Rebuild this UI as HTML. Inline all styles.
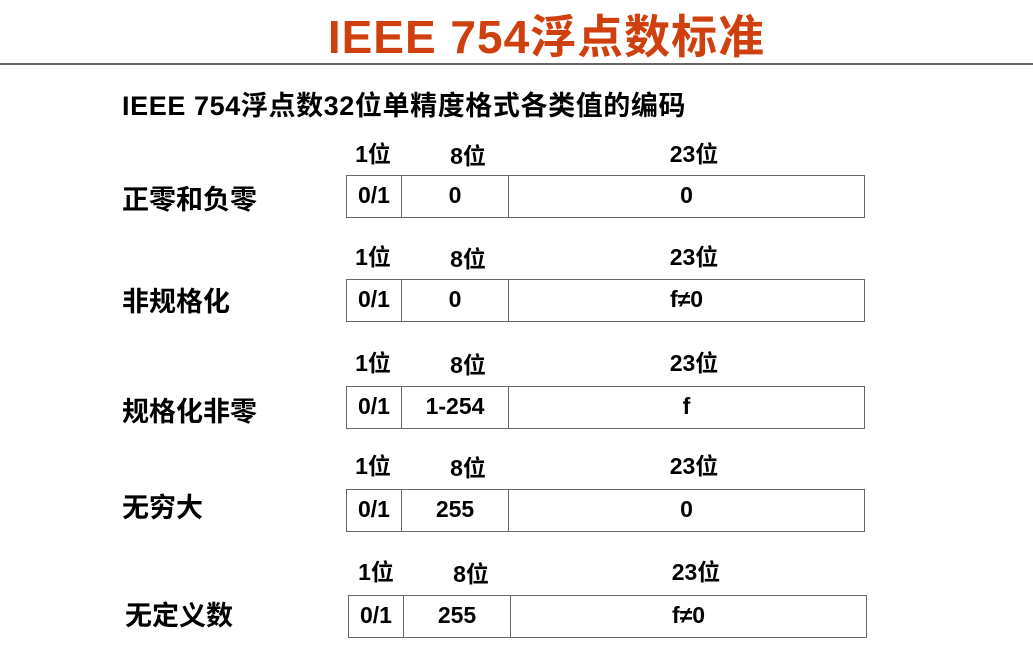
<!DOCTYPE html><html><head><meta charset="utf-8"><style>
body{margin:0;width:1033px;height:668px;background:#fff;position:relative;overflow:hidden;font-family:"Liberation Sans","Noto Sans CJK SC",sans-serif;font-weight:bold;color:#000}
.a{position:absolute;white-space:nowrap;line-height:1}
.t{left:0;width:1093px;text-align:center;top:14px;font-size:46px;color:#d0400e;letter-spacing:1px}
.hr{position:absolute;left:0;top:63px;width:1033px;height:2px;background:#666}
.s{left:122px;top:93px;font-size:27px;letter-spacing:0.6px}
.h{font-size:23px;transform:translateX(-50%)}
.l{left:122px;font-size:27px}
.tb{position:absolute;height:43px;width:519px;border:1px solid #666;box-sizing:border-box;display:flex}
.tb div{border-right:1px solid #666;box-sizing:border-box;display:flex;justify-content:center;align-items:center;font-size:23px;padding-bottom:3px}
.tb div:last-child{border:none;flex:1}
</style></head><body>
<div class="a t">IEEE 754浮点数标准</div>
<div class="hr"></div>
<div class="a s">IEEE 754浮点数32位单精度格式各类值的编码</div>

<div class="a h" style="left:373px;top:143px">1位</div><div class="a h" style="left:468px;top:145px">8位</div><div class="a h" style="left:694px;top:143px">23位</div>
<div class="a l" style="top:187px">正零和负零</div>
<div class="tb" style="left:346px;top:175px"><div style="width:55px">0/1</div><div style="width:107px">0</div><div>0</div></div>

<div class="a h" style="left:373px;top:246px">1位</div><div class="a h" style="left:468px;top:248px">8位</div><div class="a h" style="left:694px;top:246px">23位</div>
<div class="a l" style="top:289px">非规格化</div>
<div class="tb" style="left:346px;top:279px"><div style="width:55px">0/1</div><div style="width:107px">0</div><div>f≠0</div></div>

<div class="a h" style="left:373px;top:352px">1位</div><div class="a h" style="left:468px;top:354px">8位</div><div class="a h" style="left:694px;top:352px">23位</div>
<div class="a l" style="top:399px">规格化非零</div>
<div class="tb" style="left:346px;top:386px"><div style="width:55px">0/1</div><div style="width:107px">1-254</div><div>f</div></div>

<div class="a h" style="left:373px;top:455px">1位</div><div class="a h" style="left:468px;top:457px">8位</div><div class="a h" style="left:694px;top:455px">23位</div>
<div class="a l" style="top:495px">无穷大</div>
<div class="tb" style="left:346px;top:489px"><div style="width:55px">0/1</div><div style="width:107px">255</div><div>0</div></div>

<div class="a h" style="left:376px;top:561px">1位</div><div class="a h" style="left:471px;top:563px">8位</div><div class="a h" style="left:696px;top:561px">23位</div>
<div class="a l" style="left:125px;top:603px">无定义数</div>
<div class="tb" style="left:348px;top:595px"><div style="width:55px">0/1</div><div style="width:107px">255</div><div>f≠0</div></div>
</body></html>
